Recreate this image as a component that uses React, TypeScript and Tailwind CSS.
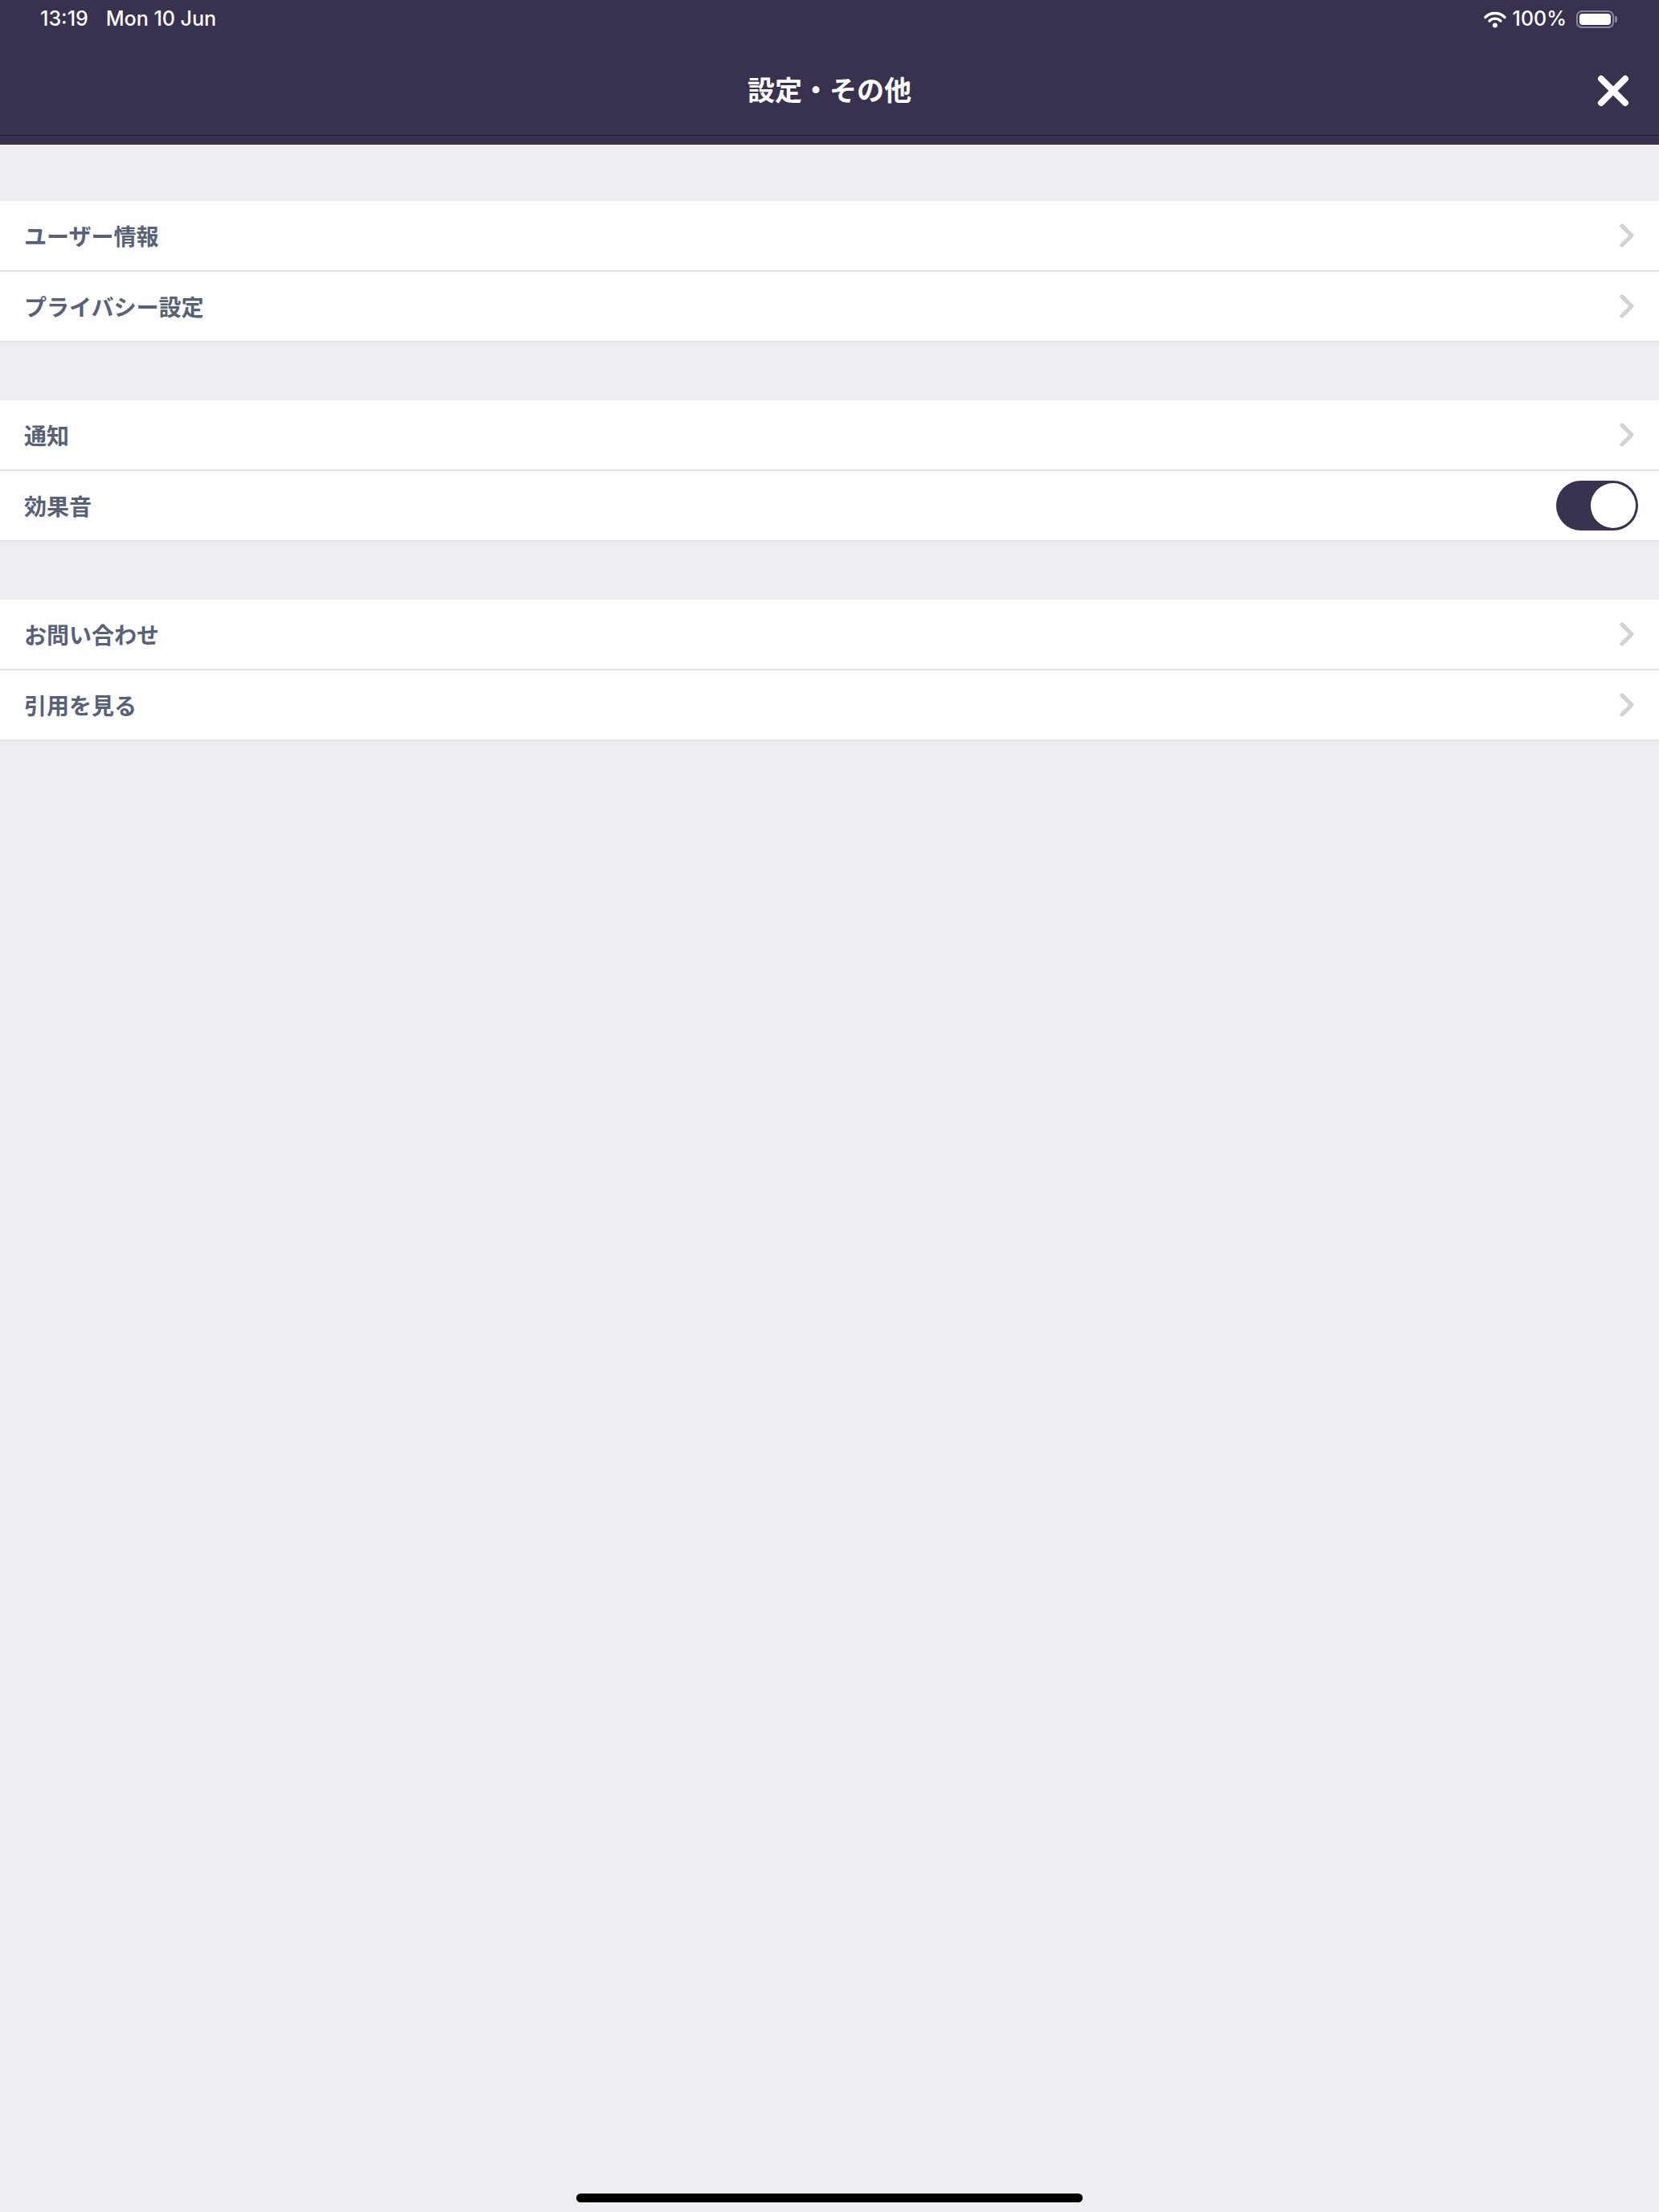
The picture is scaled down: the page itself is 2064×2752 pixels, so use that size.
import type { ReactNode } from 'react'

const sections: { label: string; toggle?: boolean }[][] = [
  [{ label: 'ユーザー情報' }, { label: 'プライバシー設定' }],
  [{ label: '通知' }, { label: '効果音', toggle: true }],
  [{ label: 'お問い合わせ' }, { label: '引用を見る' }],
]

function Chevron() {
  return (
    <svg width="18" height="30" viewBox="0 0 18 30" className="mr-[5px]">
      <polyline points="3,3 15,15 3,27" fill="none" stroke="#d1d1d6" strokeWidth="5" strokeLinecap="round" strokeLinejoin="round" />
    </svg>
  )
}

function Toggle() {
  return (
    <div className="w-[102px] h-[62px] rounded-full bg-[#3a3350] flex items-center justify-end pr-[3px]">
      <div className="w-[56px] h-[56px] rounded-full bg-white" />
    </div>
  )
}

function Row({ children, right }: { children: ReactNode; right: ReactNode }) {
  return (
    <div className="h-[88px] bg-white border-b-2 border-[#e2e2e5] pl-[30px] pr-[26px] flex items-center justify-between">
      <span className="text-[28px] font-bold text-[#596176] leading-none">{children}</span>
      {right}
    </div>
  )
}

function StatusBar() {
  return (
    <div className="h-[48px] flex items-center justify-between pl-[50px] pr-[52px] text-white text-[25px] font-medium font-['Inter',sans-serif]">
      <div className="flex items-center gap-[22px]">
        <span>13:19</span>
        <span>Mon 10 Jun</span>
      </div>
      <div className="flex items-center gap-[8px]">
        {/* wifi */}
        <svg width="28" height="22" viewBox="0 0 28 22">
          <path d="M2 8.5 A17 17 0 0 1 26 8.5" fill="none" stroke="white" strokeWidth="3.4" strokeLinecap="round" />
          <path d="M7 13 A10 10 0 0 1 21 13" fill="none" stroke="white" strokeWidth="3.4" strokeLinecap="round" />
          <circle cx="14" cy="18.5" r="3" fill="white" />
        </svg>
        <span>100%</span>
        <div className="ml-[4px] flex items-center">
          <div className="w-[47px] h-[22px] rounded-[7px] border-2 border-[#8a86a0] p-[2px]">
            <div className="w-full h-full rounded-[4px] bg-white" />
          </div>
          <div className="w-[3px] h-[8px] rounded-r-[2px] bg-[#8a86a0] ml-[1px]" />
        </div>
      </div>
    </div>
  )
}

export default function App() {
  return (
    <div className="w-[2064px] h-[2752px] bg-[#eeedf2] flex flex-col font-['Noto_Sans_CJK_JP',sans-serif] relative overflow-hidden">
      <header className="bg-[#39324f] flex flex-col">
        <StatusBar />
        <div className="h-[120px] grid grid-cols-[1fr_auto_1fr] items-center">
          <div />
          <h1 className="text-[34px] font-bold text-white leading-none pt-[6px]">設定・その他</h1>
          <div className="flex justify-end pt-[10px] pr-[37px]">
            <svg width="40" height="40" viewBox="0 0 40 40">
              <path d="M5 5 L35 35 M35 5 L5 35" stroke="white" strokeWidth="8" strokeLinecap="round" />
            </svg>
          </div>
        </div>
        <div className="h-px bg-[#25203a]" />
        <div className="h-[11px]" />
      </header>

      <div className="flex flex-col">
        {sections.map((items, i) => (
          <div key={i} className={i === 0 ? 'mt-[70px]' : 'mt-[72px]'}>
            {items.map((it) => (
              <Row key={it.label} right={it.toggle ? <Toggle /> : <Chevron />}>
                {it.label}
              </Row>
            ))}
          </div>
        ))}
      </div>

      <div className="mt-auto mb-[12px] self-center w-[630px] h-[11px] rounded-full bg-black" />
    </div>
  )
}
